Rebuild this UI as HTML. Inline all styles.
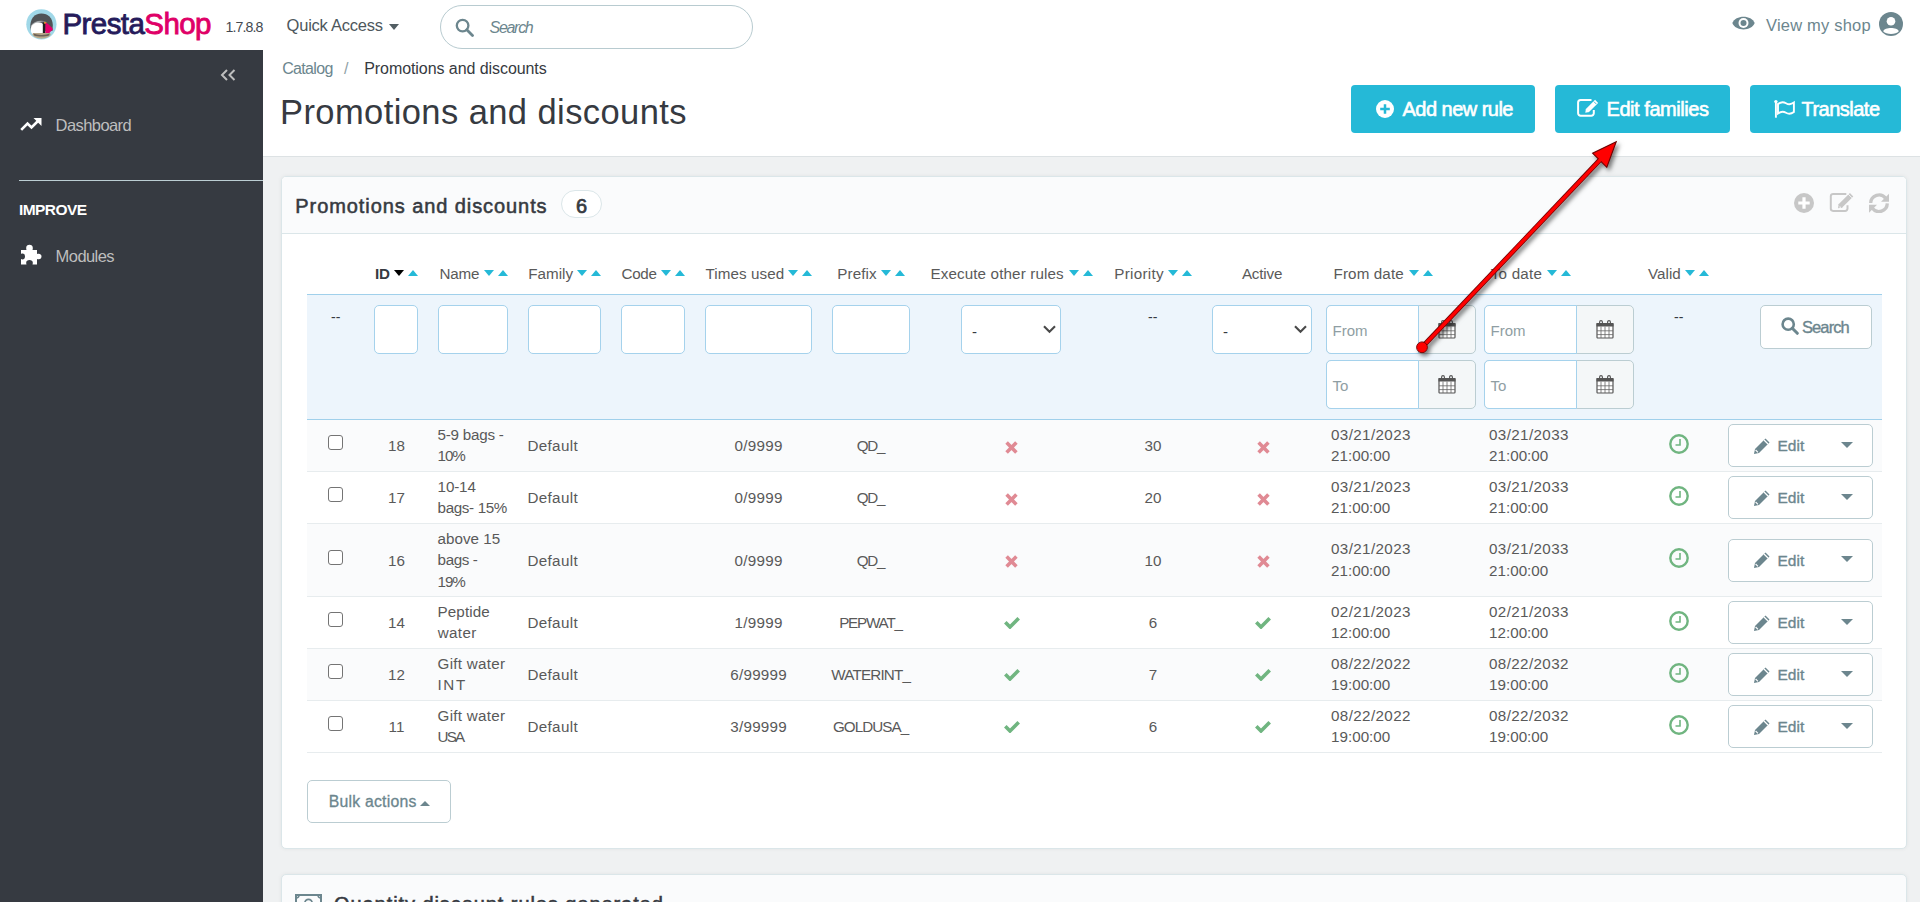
<!DOCTYPE html><html><head><meta charset='utf-8'><style>*{box-sizing:border-box;margin:0;padding:0}
html,body{width:1920px;height:902px;overflow:hidden;background:#eff1f2;font-family:"Liberation Sans",sans-serif;color:#363a41}
.a{position:absolute;white-space:nowrap}
</style></head><body>
<div class="a" style="left:0px;top:0px;width:1920px;height:50px;background:#fff"></div>
<div class="a" style="left:0px;top:50px;width:263px;height:852px;background:#363a41"></div>
<div class="a" style="left:263px;top:50px;width:1657px;height:107px;background:#fff;border-bottom:1px solid #dde2e4"></div>
<svg class="a" style="left:26px;top:9px" width="31" height="31" viewBox="0 0 31 31">
<circle cx="15.4" cy="15.3" r="15.1" fill="#a0d8e8"/>
<path d="M4.3 19 C3.8 9.5 8.5 4.6 15.4 4.6 C22 4.6 26.6 9 26.8 16 L26.5 22 L5 22Z" fill="#505457"/>
<path d="M4.8 16.8 C8 12 14 10.8 20.5 12.6 C14 12.5 9 14 5 18.5Z" fill="#a3a8ab"/>
<path d="M4.8 19.5 C5.5 15.5 9 13.6 13 13.6 C16.5 13.6 18.3 15.5 18.3 19 L18 25.5 C14.5 27.5 9 27.5 6.5 25.5 C5 23.5 4.6 21.5 4.8 19.5Z" fill="#fff"/>
<path d="M16.8 13.8 L19.6 13.5 L19.2 25 L16.8 25Z" fill="#1e1e1e"/>
<path d="M18.3 12.7 L20.6 13.3 L20 15.1 L18 14.5Z" fill="#f2a02c"/>
<path d="M19.5 13.4 C22.5 14.9 25.2 17.4 27 20.3 L21.8 25.6 L19.3 25Z" fill="#e4006c"/>
<path d="M6.3 25.5 C9 31 22 31 24.8 25.5 L24 24 L7 24Z" fill="#b8a88b"/>
<path d="M7.5 24.6 C11 26.5 20 26.5 23.6 24.6 L23 26.4 C19 27.8 12 27.8 8 26.4Z" fill="#6b6258"/>
</svg>
<div class="a" style="left:62.50px;top:9.22px;font-size:29.5px;line-height:29.5px;color:#251b5b;letter-spacing:-0.574px;-webkit-text-stroke:0.85px #251b5b;">Presta<span style="color:#df0067;-webkit-text-stroke:0.85px #df0067">Shop</span></div>
<div class="a" style="left:225.60px;top:19.83px;font-size:14.2px;line-height:14.2px;color:#45494f;letter-spacing:-0.921px;">1.7.8.8</div>
<div class="a" style="left:286.60px;top:17.48px;font-size:16.5px;line-height:16.5px;color:#4d575c;letter-spacing:-0.239px;">Quick Access</div>
<div class="a" style="left:389.3px;top:24px;width:0px;height:0px;border-left:5.25px solid transparent;border-right:5.25px solid transparent;border-top:6px solid #525e63"></div>
<div class="a" style="left:440px;top:5px;width:313px;height:44px;border:1px solid #b8cbd0;border-radius:22px"></div>
<svg class="a" style="left:455px;top:18px" width="20" height="19" viewBox="0 0 20 19"><circle cx="7.6" cy="7.6" r="5.8" fill="none" stroke="#6c868e" stroke-width="2.3"/><path d="M11.8 11.8 L17.5 17.5" stroke="#6c868e" stroke-width="2.8" stroke-linecap="round"/></svg>
<div class="a" style="left:489.50px;top:19.90px;font-size:16px;line-height:16px;color:#6c868e;font-style:italic;letter-spacing:-1.288px;">Search</div>
<svg class="a" style="left:1732px;top:14.5px" width="23" height="16" viewBox="0 0 23 16"><path d="M0.3 8 C3.5 -0.5 19.5 -0.5 22.7 8 C19.5 16.5 3.5 16.5 0.3 8Z" fill="#6c868e"/><circle cx="11.5" cy="8" r="5" fill="#fff"/><circle cx="11.5" cy="8" r="3" fill="#6c868e"/></svg>
<div class="a" style="left:1766.00px;top:16.57px;font-size:16.5px;line-height:16.5px;color:#6c868e;letter-spacing:0.199px;">View my shop</div>
<svg class="a" style="left:1879px;top:12px" width="24" height="24" viewBox="0 0 24 24"><circle cx="12" cy="12" r="12" fill="#6c868e"/><circle cx="12" cy="9.2" r="4.3" fill="#fff"/><path d="M4.2 19.2 C5.5 14.8 18.5 14.8 19.8 19.2 C17 22.8 7 22.8 4.2 19.2Z" fill="#fff"/></svg>
<svg class="a" style="left:220px;top:69px" width="17" height="12" viewBox="0 0 17 12"><path d="M7 1 L2 6 L7 11 M14.5 1 L9.5 6 L14.5 11" fill="none" stroke="#bebebe" stroke-width="2"/></svg>
<svg class="a" style="left:20px;top:117px" width="22" height="14" viewBox="0 0 22 14"><path d="M1.2 12.8 L7.5 6.5 L11.5 10.5 L18.5 3.5" fill="none" stroke="#fff" stroke-width="2.6"/><path d="M13.5 1 L21.5 1 L21.5 9 Z" fill="#fff"/></svg>
<div class="a" style="left:55.60px;top:116.78px;font-size:16.5px;line-height:16.5px;color:#bebebe;letter-spacing:-0.577px;">Dashboard</div>
<div class="a" style="left:19px;top:180px;width:244px;height:1px;background:#bbcdd2"></div>
<div class="a" style="left:19.00px;top:201.82px;font-size:15.5px;line-height:15.5px;color:#fff;font-weight:bold;letter-spacing:-0.581px;">IMPROVE</div>
<svg class="a" style="left:20px;top:244px" width="22" height="21" viewBox="0 0 22 21"><path d="M1 6 L6.5 6 C5.5 2.5 7 0.8 9.5 0.8 C12 0.8 13.5 2.5 12.5 6 L17 6 L17 10 C20 9 21.5 10.5 21.5 12.5 C21.5 14.5 20 16 17 15 L17 20.5 L12.5 20.5 C13.5 17.5 12 16 9.5 16 C7 16 5.5 17.5 6.5 20.5 L1 20.5 L1 15 C3 16 5 15 5 12.5 C5 10 3 9 1 10 Z" fill="#fff"/></svg>
<div class="a" style="left:55.60px;top:248.37px;font-size:16.5px;line-height:16.5px;color:#bebebe;letter-spacing:-0.562px;">Modules</div>
<div class="a" style="left:282.20px;top:60.60px;font-size:16px;line-height:16px;color:#6c868e;letter-spacing:-0.675px;">Catalog</div>
<div class="a" style="left:344.00px;top:60.60px;font-size:16px;line-height:16px;color:#8fa1a6;">/</div>
<div class="a" style="left:364.20px;top:60.60px;font-size:16px;line-height:16px;color:#363a41;letter-spacing:-0.067px;">Promotions and discounts</div>
<div class="a" style="left:280.00px;top:95.28px;font-size:34.5px;line-height:34.5px;color:#363a41;letter-spacing:0.415px;">Promotions and discounts</div>
<div class="a" style="left:1351px;top:85px;width:184px;height:48px;background:#25b9d7;border-radius:4px"></div>
<svg class="a" style="left:1375.7px;top:99.7px" width="18" height="18" viewBox="0 0 18 18"><circle cx="9" cy="9" r="9" fill="#fff"/><path d="M9 4.2 V13.8 M4.2 9 H13.8" stroke="#25b9d7" stroke-width="2.5"/></svg>
<div class="a" style="left:1402.50px;top:99.10px;font-size:20px;line-height:20px;color:#fff;letter-spacing:-0.522px;-webkit-text-stroke:0.6px #fff;">Add new rule</div>
<div class="a" style="left:1555px;top:85px;width:175px;height:48px;background:#25b9d7;border-radius:4px"></div>
<svg class="a" style="left:1577px;top:99px" width="23" height="18" viewBox="0 0 23 18"><path d="M14.5 1.1 H3.6 A2.5 2.5 0 0 0 1.1 3.6 V14.3 A2.5 2.5 0 0 0 3.6 16.8 H14.3 A2.5 2.5 0 0 0 16.8 14.3 V11" stroke="#fff" stroke-width="2" fill="none"/><path d="M10.2 11.8 L19.6 2.4" stroke="#fff" stroke-width="4.4"/><path d="M8.3 13.7 L8.9 9.8 L12.2 13.1 Z" fill="#fff"/><path d="M16.9 2.6 L19.4 5.1" stroke="#25b9d7" stroke-width="0.9"/></svg>
<div class="a" style="left:1606.50px;top:99.10px;font-size:20px;line-height:20px;color:#fff;letter-spacing:-0.443px;-webkit-text-stroke:0.6px #fff;">Edit families</div>
<div class="a" style="left:1750px;top:85px;width:151px;height:48px;background:#25b9d7;border-radius:4px"></div>
<svg class="a" style="left:1772px;top:99px" width="24" height="20" viewBox="0 0 24 20"><path d="M3.9 2.8 V18.7" stroke="#fff" stroke-width="1.9"/><circle cx="3.9" cy="2.6" r="1.7" fill="#fff"/><path d="M6 5 C9 2.6 12 3 14 4.2 C16 5.4 19 5.7 21.9 3.6 V13 C19 15.1 16 14.9 14 13.7 C12 12.5 9 12.1 6 14.4 Z" stroke="#fff" stroke-width="1.9" fill="none"/></svg>
<div class="a" style="left:1801.50px;top:99.10px;font-size:20px;line-height:20px;color:#fff;letter-spacing:-0.515px;-webkit-text-stroke:0.6px #fff;">Translate</div>
<div class="a" style="left:281px;top:176px;width:1626px;height:673px;background:#fff;border:1px solid #dbe6e9;border-radius:5px;box-shadow:0 0 4px 0 rgba(0,0,0,.06)"></div>
<div class="a" style="left:282px;top:177px;width:1624px;height:57px;background:#fafbfc;border-radius:4px 4px 0 0;border-bottom:1px solid #dbe6e9"></div>
<div class="a" style="left:295.30px;top:195.80px;font-size:20px;line-height:20px;color:#363a41;letter-spacing:0.921px;-webkit-text-stroke:0.55px #363a41;">Promotions and discounts</div>
<div class="a" style="left:561px;top:190px;width:41px;height:28px;border:1px solid #dbe6e9;border-radius:14px;background:#fff"></div>
<div class="a" style="left:581.50px;top:195.80px;font-size:20px;line-height:20px;color:#363a41;transform:translateX(-50%);-webkit-text-stroke:0.7px #363a41;">6</div>
<svg class="a" style="left:1793.9px;top:192.7px" width="20" height="20" viewBox="0 0 20 20"><circle cx="10" cy="10" r="10" fill="#c7c7c7"/><path d="M10 4.3 V15.7 M4.3 10 H15.7" stroke="#fff" stroke-width="3.2"/></svg>
<svg class="a" style="left:1829px;top:191.5px" width="26" height="21" viewBox="0 0 26 21"><path d="M17.3 1.9 H4.1 A2.3 2.3 0 0 0 1.8 4.2 V16.6 A2.3 2.3 0 0 0 4.1 18.9 H16.2 A2.3 2.3 0 0 0 18.5 16.6 V13.3" fill="none" stroke="#c7c7c7" stroke-width="2"/><path d="M11 14.2 L22.6 2.8" stroke="#c7c7c7" stroke-width="4.8"/><path d="M9 16.3 L9.7 11.7 L13.6 15.6 Z" fill="#c7c7c7"/><path d="M19.2 2.1 L22.9 5.8" stroke="#fafbfc" stroke-width="0.9"/><path d="M10.6 14.6 L11.6 15.6" stroke="#fafbfc" stroke-width="1.1"/></svg>
<svg class="a" style="left:1869px;top:192.5px" width="20" height="20" viewBox="0 0 20 20"><path d="M1.7 10 A8.3 8.3 0 0 1 16.6 5.2" fill="none" stroke="#c7c7c7" stroke-width="3.3"/><path d="M20 0.8 V8.8 H12 Z" fill="#c7c7c7"/><path d="M18.3 10.4 A8.3 8.3 0 0 1 3.4 15.2" fill="none" stroke="#c7c7c7" stroke-width="3.3"/><path d="M0 19.8 V11.8 H8 Z" fill="#c7c7c7"/></svg>
<div class="a" style="left:375.00px;top:265.98px;font-size:15.2px;line-height:15.2px;color:#363a41;font-weight:bold;letter-spacing:-0.200px;">ID</div>
<div class="a" style="left:394px;top:270px;width:0px;height:0px;border-left:5.25px solid transparent;border-right:5.25px solid transparent;border-top:6px solid #000"></div>
<div class="a" style="left:408px;top:270.2px;width:0px;height:0px;border-left:5.25px solid transparent;border-right:5.25px solid transparent;border-bottom:6px solid #25b9d7"></div>
<div class="a" style="left:439.50px;top:265.98px;font-size:15.2px;line-height:15.2px;color:#5a5a5a;letter-spacing:-0.185px;">Name</div>
<div class="a" style="left:484.1px;top:270px;width:0px;height:0px;border-left:5.25px solid transparent;border-right:5.25px solid transparent;border-top:6px solid #25b9d7"></div>
<div class="a" style="left:498.1px;top:270.2px;width:0px;height:0px;border-left:5.25px solid transparent;border-right:5.25px solid transparent;border-bottom:6px solid #25b9d7"></div>
<div class="a" style="left:528.30px;top:265.98px;font-size:15.2px;line-height:15.2px;color:#5a5a5a;letter-spacing:0.010px;">Family</div>
<div class="a" style="left:577.3px;top:270px;width:0px;height:0px;border-left:5.25px solid transparent;border-right:5.25px solid transparent;border-top:6px solid #25b9d7"></div>
<div class="a" style="left:591.3px;top:270.2px;width:0px;height:0px;border-left:5.25px solid transparent;border-right:5.25px solid transparent;border-bottom:6px solid #25b9d7"></div>
<div class="a" style="left:621.50px;top:265.98px;font-size:15.2px;line-height:15.2px;color:#5a5a5a;letter-spacing:-0.314px;">Code</div>
<div class="a" style="left:661px;top:270px;width:0px;height:0px;border-left:5.25px solid transparent;border-right:5.25px solid transparent;border-top:6px solid #25b9d7"></div>
<div class="a" style="left:675px;top:270.2px;width:0px;height:0px;border-left:5.25px solid transparent;border-right:5.25px solid transparent;border-bottom:6px solid #25b9d7"></div>
<div class="a" style="left:705.40px;top:265.98px;font-size:15.2px;line-height:15.2px;color:#5a5a5a;letter-spacing:0.090px;">Times used</div>
<div class="a" style="left:788.3px;top:270px;width:0px;height:0px;border-left:5.25px solid transparent;border-right:5.25px solid transparent;border-top:6px solid #25b9d7"></div>
<div class="a" style="left:802.3px;top:270.2px;width:0px;height:0px;border-left:5.25px solid transparent;border-right:5.25px solid transparent;border-bottom:6px solid #25b9d7"></div>
<div class="a" style="left:837.30px;top:265.98px;font-size:15.2px;line-height:15.2px;color:#5a5a5a;letter-spacing:0.110px;">Prefix</div>
<div class="a" style="left:881px;top:270px;width:0px;height:0px;border-left:5.25px solid transparent;border-right:5.25px solid transparent;border-top:6px solid #25b9d7"></div>
<div class="a" style="left:895px;top:270.2px;width:0px;height:0px;border-left:5.25px solid transparent;border-right:5.25px solid transparent;border-bottom:6px solid #25b9d7"></div>
<div class="a" style="left:930.40px;top:265.98px;font-size:15.2px;line-height:15.2px;color:#5a5a5a;letter-spacing:0.133px;">Execute other rules</div>
<div class="a" style="left:1068.5px;top:270px;width:0px;height:0px;border-left:5.25px solid transparent;border-right:5.25px solid transparent;border-top:6px solid #25b9d7"></div>
<div class="a" style="left:1082.5px;top:270.2px;width:0px;height:0px;border-left:5.25px solid transparent;border-right:5.25px solid transparent;border-bottom:6px solid #25b9d7"></div>
<div class="a" style="left:1114.20px;top:265.98px;font-size:15.2px;line-height:15.2px;color:#5a5a5a;letter-spacing:0.323px;">Priority</div>
<div class="a" style="left:1168px;top:270px;width:0px;height:0px;border-left:5.25px solid transparent;border-right:5.25px solid transparent;border-top:6px solid #25b9d7"></div>
<div class="a" style="left:1182px;top:270.2px;width:0px;height:0px;border-left:5.25px solid transparent;border-right:5.25px solid transparent;border-bottom:6px solid #25b9d7"></div>
<div class="a" style="left:1241.90px;top:265.98px;font-size:15.2px;line-height:15.2px;color:#5a5a5a;letter-spacing:-0.158px;">Active</div>
<div class="a" style="left:1333.50px;top:265.98px;font-size:15.2px;line-height:15.2px;color:#5a5a5a;letter-spacing:0.123px;">From date</div>
<div class="a" style="left:1408.5px;top:270px;width:0px;height:0px;border-left:5.25px solid transparent;border-right:5.25px solid transparent;border-top:6px solid #25b9d7"></div>
<div class="a" style="left:1422.5px;top:270.2px;width:0px;height:0px;border-left:5.25px solid transparent;border-right:5.25px solid transparent;border-bottom:6px solid #25b9d7"></div>
<div class="a" style="left:1490.80px;top:265.98px;font-size:15.2px;line-height:15.2px;color:#5a5a5a;letter-spacing:0.207px;">To date</div>
<div class="a" style="left:1546.5px;top:270px;width:0px;height:0px;border-left:5.25px solid transparent;border-right:5.25px solid transparent;border-top:6px solid #25b9d7"></div>
<div class="a" style="left:1560.5px;top:270.2px;width:0px;height:0px;border-left:5.25px solid transparent;border-right:5.25px solid transparent;border-bottom:6px solid #25b9d7"></div>
<div class="a" style="left:1648.00px;top:265.98px;font-size:15.2px;line-height:15.2px;color:#5a5a5a;letter-spacing:0.034px;">Valid</div>
<div class="a" style="left:1685.2px;top:270px;width:0px;height:0px;border-left:5.25px solid transparent;border-right:5.25px solid transparent;border-top:6px solid #25b9d7"></div>
<div class="a" style="left:1699.2px;top:270.2px;width:0px;height:0px;border-left:5.25px solid transparent;border-right:5.25px solid transparent;border-bottom:6px solid #25b9d7"></div>
<div class="a" style="left:307px;top:294px;width:1575px;height:126px;background:#edf5fc;border-top:1px solid #a0d0eb;border-bottom:1px solid #a0d0eb"></div>
<div class="a" style="left:331.00px;top:309.50px;font-size:14px;line-height:14px;color:#363a41;">--</div>
<div class="a" style="left:1148.00px;top:309.50px;font-size:14px;line-height:14px;color:#363a41;">--</div>
<div class="a" style="left:1674.00px;top:309.50px;font-size:14px;line-height:14px;color:#363a41;">--</div>
<div class="a" style="left:374px;top:305px;width:44px;height:49px;background:#fff;border:1px solid #a5d2ec;border-radius:5px"></div>
<div class="a" style="left:438px;top:305px;width:70px;height:49px;background:#fff;border:1px solid #a5d2ec;border-radius:5px"></div>
<div class="a" style="left:528px;top:305px;width:73px;height:49px;background:#fff;border:1px solid #a5d2ec;border-radius:5px"></div>
<div class="a" style="left:621px;top:305px;width:64px;height:49px;background:#fff;border:1px solid #a5d2ec;border-radius:5px"></div>
<div class="a" style="left:705px;top:305px;width:107px;height:49px;background:#fff;border:1px solid #a5d2ec;border-radius:5px"></div>
<div class="a" style="left:832px;top:305px;width:78px;height:49px;background:#fff;border:1px solid #a5d2ec;border-radius:5px"></div>
<div class="a" style="left:961px;top:305px;width:100px;height:49px;background:#fff;border:1px solid #a5d2ec;border-radius:5px"></div>
<div class="a" style="left:972.00px;top:324.15px;font-size:15px;line-height:15px;color:#363a41;">-</div>
<svg class="a" style="left:1043px;top:325px" width="13" height="9" viewBox="0 0 13 9"><path d="M1 1.2 L6.5 6.8 L12 1.2" fill="none" stroke="#4a4a4a" stroke-width="2.1"/></svg>
<div class="a" style="left:1212px;top:305px;width:100px;height:49px;background:#fff;border:1px solid #a5d2ec;border-radius:5px"></div>
<div class="a" style="left:1223.00px;top:324.15px;font-size:15px;line-height:15px;color:#363a41;">-</div>
<svg class="a" style="left:1294px;top:325px" width="13" height="9" viewBox="0 0 13 9"><path d="M1 1.2 L6.5 6.8 L12 1.2" fill="none" stroke="#4a4a4a" stroke-width="2.1"/></svg>
<div class="a" style="left:1326px;top:305px;width:150px;height:49px;background:#f4f7f8;border:1px solid #bbcdd2;border-radius:5px"></div>
<div class="a" style="left:1326px;top:305px;width:92.5px;height:49px;background:#fff;border:1px solid #a5d2ec;border-radius:5px 0 0 5px"></div>
<div class="a" style="left:1332.50px;top:322.55px;font-size:15px;line-height:15px;color:#8f9ea3;">From</div>
<svg class="a" style="left:1438px;top:319.5px" width="18" height="19" viewBox="0 0 18 19"><rect x="1" y="3.5" width="16" height="14.5" rx="0.8" fill="#fff" stroke="#555" stroke-width="1.2"/><rect x="0.5" y="3" width="17" height="3.6" rx="0.6" fill="#555"/><rect x="3.6" y="0.6" width="2.8" height="4.6" rx="1.4" fill="none" stroke="#555" stroke-width="1.1"/><rect x="11.6" y="0.6" width="2.8" height="4.6" rx="1.4" fill="none" stroke="#555" stroke-width="1.1"/><path d="M1 10.8 H17 M1 14.6 H17 M5 6.6 V18 M9 6.6 V18 M13 6.6 V18" stroke="#666" stroke-width="0.8"/></svg>
<div class="a" style="left:1326px;top:360px;width:150px;height:49px;background:#f4f7f8;border:1px solid #bbcdd2;border-radius:5px"></div>
<div class="a" style="left:1326px;top:360px;width:92.5px;height:49px;background:#fff;border:1px solid #a5d2ec;border-radius:5px 0 0 5px"></div>
<div class="a" style="left:1332.50px;top:377.55px;font-size:15px;line-height:15px;color:#8f9ea3;">To</div>
<svg class="a" style="left:1438px;top:374.5px" width="18" height="19" viewBox="0 0 18 19"><rect x="1" y="3.5" width="16" height="14.5" rx="0.8" fill="#fff" stroke="#555" stroke-width="1.2"/><rect x="0.5" y="3" width="17" height="3.6" rx="0.6" fill="#555"/><rect x="3.6" y="0.6" width="2.8" height="4.6" rx="1.4" fill="none" stroke="#555" stroke-width="1.1"/><rect x="11.6" y="0.6" width="2.8" height="4.6" rx="1.4" fill="none" stroke="#555" stroke-width="1.1"/><path d="M1 10.8 H17 M1 14.6 H17 M5 6.6 V18 M9 6.6 V18 M13 6.6 V18" stroke="#666" stroke-width="0.8"/></svg>
<div class="a" style="left:1484px;top:305px;width:150px;height:49px;background:#f4f7f8;border:1px solid #bbcdd2;border-radius:5px"></div>
<div class="a" style="left:1484px;top:305px;width:92.5px;height:49px;background:#fff;border:1px solid #a5d2ec;border-radius:5px 0 0 5px"></div>
<div class="a" style="left:1490.50px;top:322.55px;font-size:15px;line-height:15px;color:#8f9ea3;">From</div>
<svg class="a" style="left:1596px;top:319.5px" width="18" height="19" viewBox="0 0 18 19"><rect x="1" y="3.5" width="16" height="14.5" rx="0.8" fill="#fff" stroke="#555" stroke-width="1.2"/><rect x="0.5" y="3" width="17" height="3.6" rx="0.6" fill="#555"/><rect x="3.6" y="0.6" width="2.8" height="4.6" rx="1.4" fill="none" stroke="#555" stroke-width="1.1"/><rect x="11.6" y="0.6" width="2.8" height="4.6" rx="1.4" fill="none" stroke="#555" stroke-width="1.1"/><path d="M1 10.8 H17 M1 14.6 H17 M5 6.6 V18 M9 6.6 V18 M13 6.6 V18" stroke="#666" stroke-width="0.8"/></svg>
<div class="a" style="left:1484px;top:360px;width:150px;height:49px;background:#f4f7f8;border:1px solid #bbcdd2;border-radius:5px"></div>
<div class="a" style="left:1484px;top:360px;width:92.5px;height:49px;background:#fff;border:1px solid #a5d2ec;border-radius:5px 0 0 5px"></div>
<div class="a" style="left:1490.50px;top:377.55px;font-size:15px;line-height:15px;color:#8f9ea3;">To</div>
<svg class="a" style="left:1596px;top:374.5px" width="18" height="19" viewBox="0 0 18 19"><rect x="1" y="3.5" width="16" height="14.5" rx="0.8" fill="#fff" stroke="#555" stroke-width="1.2"/><rect x="0.5" y="3" width="17" height="3.6" rx="0.6" fill="#555"/><rect x="3.6" y="0.6" width="2.8" height="4.6" rx="1.4" fill="none" stroke="#555" stroke-width="1.1"/><rect x="11.6" y="0.6" width="2.8" height="4.6" rx="1.4" fill="none" stroke="#555" stroke-width="1.1"/><path d="M1 10.8 H17 M1 14.6 H17 M5 6.6 V18 M9 6.6 V18 M13 6.6 V18" stroke="#666" stroke-width="0.8"/></svg>
<div class="a" style="left:1760px;top:305px;width:112px;height:44px;background:#fff;border:1px solid #bbcdd2;border-radius:5px"></div>
<svg class="a" style="left:1781px;top:317px" width="18" height="18" viewBox="0 0 18 18"><circle cx="7.2" cy="7.2" r="5.6" fill="none" stroke="#6c868e" stroke-width="2.6"/><path d="M11.3 11.3 L16.3 16.3" stroke="#6c868e" stroke-width="3" stroke-linecap="round"/></svg>
<div class="a" style="left:1801.90px;top:318.77px;font-size:16.5px;line-height:16.5px;color:#6c868e;letter-spacing:-0.874px;-webkit-text-stroke:0.35px #6c868e;">Search</div>
<div class="a" style="left:307px;top:420px;width:1575px;height:51px;background:#fafbfc"></div>
<div class="a" style="left:307px;top:471px;width:1575px;height:1px;background:#e7ecee"></div>
<div class="a" style="left:328px;top:435px;width:15px;height:15px;background:#fff;border:1.5px solid #747474;border-radius:3px"></div>
<div class="a" style="left:396.50px;top:438.48px;font-size:15.2px;line-height:15.2px;color:#595959;transform:translateX(-50%);">18</div>
<div class="a" style="left:437.60px;top:426.88px;font-size:15.2px;line-height:15.2px;color:#595959;letter-spacing:-0.237px;">5-9 bags -</div>
<div class="a" style="left:437.60px;top:448.48px;font-size:15.2px;line-height:15.2px;color:#595959;letter-spacing:-1.058px;">10%</div>
<div class="a" style="left:527.40px;top:438.48px;font-size:15.2px;line-height:15.2px;color:#595959;letter-spacing:0.358px;">Default</div>
<div class="a" style="left:734.50px;top:438.48px;font-size:15.2px;line-height:15.2px;color:#595959;letter-spacing:0.301px;">0/9999</div>
<div class="a" style="left:856.75px;top:438.48px;font-size:15.2px;line-height:15.2px;color:#595959;letter-spacing:-1.267px;">QD_</div>
<div class="a" style="left:1153.00px;top:438.48px;font-size:15.2px;line-height:15.2px;color:#595959;transform:translateX(-50%);">30</div>
<svg class="a" style="left:1005.0px;top:440.6px" width="13" height="13" viewBox="0 0 13 13"><path d="M1.6 1.6 L11.4 11.4 M11.4 1.6 L1.6 11.4" stroke="#e08a94" stroke-width="3.6"/></svg>
<svg class="a" style="left:1256.5px;top:440.6px" width="13" height="13" viewBox="0 0 13 13"><path d="M1.6 1.6 L11.4 11.4 M11.4 1.6 L1.6 11.4" stroke="#e08a94" stroke-width="3.6"/></svg>
<div class="a" style="left:1331.00px;top:426.88px;font-size:15.2px;line-height:15.2px;color:#595959;letter-spacing:0.380px;">03/21/2023</div>
<div class="a" style="left:1331.00px;top:448.48px;font-size:15.2px;line-height:15.2px;color:#595959;letter-spacing:0.018px;">21:00:00</div>
<div class="a" style="left:1489.00px;top:426.88px;font-size:15.2px;line-height:15.2px;color:#595959;letter-spacing:0.380px;">03/21/2033</div>
<div class="a" style="left:1489.00px;top:448.48px;font-size:15.2px;line-height:15.2px;color:#595959;letter-spacing:0.018px;">21:00:00</div>
<svg class="a" style="left:1669px;top:433.8px" width="20" height="20" viewBox="0 0 20 20"><circle cx="10" cy="10" r="8.7" fill="none" stroke="#70b580" stroke-width="2.4"/><path d="M11 5 V11 H6.5" fill="none" stroke="#70b580" stroke-width="1.6"/></svg>
<div class="a" style="left:1728px;top:424px;width:145px;height:43px;background:#fff;border:1px solid #bbcdd2;border-radius:5px"></div>
<svg class="a" style="left:1752.5px;top:436.5px" width="18" height="18" viewBox="0 0 18 18"><path d="M12.5 1.5 L16.5 5.5 L6 16 L1 17 L2 12 Z" fill="#6c868e"/><path d="M11 3 L15 7" stroke="#fff" stroke-width="1.2"/><path d="M2.6 13 L5 15.4" stroke="#fff" stroke-width="1.1"/></svg>
<div class="a" style="left:1777.50px;top:438.42px;font-size:15.5px;line-height:15.5px;color:#6c868e;letter-spacing:-0.002px;-webkit-text-stroke:0.35px #6c868e;">Edit</div>
<div class="a" style="left:1841px;top:442px;width:0px;height:0px;border-left:6px solid transparent;border-right:6px solid transparent;border-top:6.5px solid #6c868e"></div>
<div class="a" style="left:307px;top:472px;width:1575px;height:51px;background:#fff"></div>
<div class="a" style="left:307px;top:523px;width:1575px;height:1px;background:#e7ecee"></div>
<div class="a" style="left:328px;top:487px;width:15px;height:15px;background:#fff;border:1.5px solid #747474;border-radius:3px"></div>
<div class="a" style="left:396.50px;top:490.48px;font-size:15.2px;line-height:15.2px;color:#595959;transform:translateX(-50%);">17</div>
<div class="a" style="left:437.60px;top:478.88px;font-size:15.2px;line-height:15.2px;color:#595959;letter-spacing:-0.145px;">10-14</div>
<div class="a" style="left:437.60px;top:500.48px;font-size:15.2px;line-height:15.2px;color:#595959;letter-spacing:-0.359px;">bags- 15%</div>
<div class="a" style="left:527.40px;top:490.48px;font-size:15.2px;line-height:15.2px;color:#595959;letter-spacing:0.358px;">Default</div>
<div class="a" style="left:734.50px;top:490.48px;font-size:15.2px;line-height:15.2px;color:#595959;letter-spacing:0.301px;">0/9999</div>
<div class="a" style="left:856.75px;top:490.48px;font-size:15.2px;line-height:15.2px;color:#595959;letter-spacing:-1.267px;">QD_</div>
<div class="a" style="left:1153.00px;top:490.48px;font-size:15.2px;line-height:15.2px;color:#595959;transform:translateX(-50%);">20</div>
<svg class="a" style="left:1005.0px;top:492.6px" width="13" height="13" viewBox="0 0 13 13"><path d="M1.6 1.6 L11.4 11.4 M11.4 1.6 L1.6 11.4" stroke="#e08a94" stroke-width="3.6"/></svg>
<svg class="a" style="left:1256.5px;top:492.6px" width="13" height="13" viewBox="0 0 13 13"><path d="M1.6 1.6 L11.4 11.4 M11.4 1.6 L1.6 11.4" stroke="#e08a94" stroke-width="3.6"/></svg>
<div class="a" style="left:1331.00px;top:478.88px;font-size:15.2px;line-height:15.2px;color:#595959;letter-spacing:0.380px;">03/21/2023</div>
<div class="a" style="left:1331.00px;top:500.48px;font-size:15.2px;line-height:15.2px;color:#595959;letter-spacing:0.018px;">21:00:00</div>
<div class="a" style="left:1489.00px;top:478.88px;font-size:15.2px;line-height:15.2px;color:#595959;letter-spacing:0.380px;">03/21/2033</div>
<div class="a" style="left:1489.00px;top:500.48px;font-size:15.2px;line-height:15.2px;color:#595959;letter-spacing:0.018px;">21:00:00</div>
<svg class="a" style="left:1669px;top:485.8px" width="20" height="20" viewBox="0 0 20 20"><circle cx="10" cy="10" r="8.7" fill="none" stroke="#70b580" stroke-width="2.4"/><path d="M11 5 V11 H6.5" fill="none" stroke="#70b580" stroke-width="1.6"/></svg>
<div class="a" style="left:1728px;top:476px;width:145px;height:43px;background:#fff;border:1px solid #bbcdd2;border-radius:5px"></div>
<svg class="a" style="left:1752.5px;top:488.5px" width="18" height="18" viewBox="0 0 18 18"><path d="M12.5 1.5 L16.5 5.5 L6 16 L1 17 L2 12 Z" fill="#6c868e"/><path d="M11 3 L15 7" stroke="#fff" stroke-width="1.2"/><path d="M2.6 13 L5 15.4" stroke="#fff" stroke-width="1.1"/></svg>
<div class="a" style="left:1777.50px;top:490.42px;font-size:15.5px;line-height:15.5px;color:#6c868e;letter-spacing:-0.002px;-webkit-text-stroke:0.35px #6c868e;">Edit</div>
<div class="a" style="left:1841px;top:494px;width:0px;height:0px;border-left:6px solid transparent;border-right:6px solid transparent;border-top:6.5px solid #6c868e"></div>
<div class="a" style="left:307px;top:524px;width:1575px;height:72px;background:#fafbfc"></div>
<div class="a" style="left:307px;top:596px;width:1575px;height:1px;background:#e7ecee"></div>
<div class="a" style="left:328px;top:550px;width:15px;height:15px;background:#fff;border:1.5px solid #747474;border-radius:3px"></div>
<div class="a" style="left:396.50px;top:552.98px;font-size:15.2px;line-height:15.2px;color:#595959;transform:translateX(-50%);">16</div>
<div class="a" style="left:437.60px;top:530.58px;font-size:15.2px;line-height:15.2px;color:#595959;letter-spacing:0.022px;">above 15</div>
<div class="a" style="left:437.60px;top:552.18px;font-size:15.2px;line-height:15.2px;color:#595959;letter-spacing:-0.388px;">bags -</div>
<div class="a" style="left:437.60px;top:573.78px;font-size:15.2px;line-height:15.2px;color:#595959;letter-spacing:-1.058px;">19%</div>
<div class="a" style="left:527.40px;top:552.98px;font-size:15.2px;line-height:15.2px;color:#595959;letter-spacing:0.358px;">Default</div>
<div class="a" style="left:734.50px;top:552.98px;font-size:15.2px;line-height:15.2px;color:#595959;letter-spacing:0.301px;">0/9999</div>
<div class="a" style="left:856.75px;top:552.98px;font-size:15.2px;line-height:15.2px;color:#595959;letter-spacing:-1.267px;">QD_</div>
<div class="a" style="left:1153.00px;top:552.98px;font-size:15.2px;line-height:15.2px;color:#595959;transform:translateX(-50%);">10</div>
<svg class="a" style="left:1005.0px;top:555.1px" width="13" height="13" viewBox="0 0 13 13"><path d="M1.6 1.6 L11.4 11.4 M11.4 1.6 L1.6 11.4" stroke="#e08a94" stroke-width="3.6"/></svg>
<svg class="a" style="left:1256.5px;top:555.1px" width="13" height="13" viewBox="0 0 13 13"><path d="M1.6 1.6 L11.4 11.4 M11.4 1.6 L1.6 11.4" stroke="#e08a94" stroke-width="3.6"/></svg>
<div class="a" style="left:1331.00px;top:541.38px;font-size:15.2px;line-height:15.2px;color:#595959;letter-spacing:0.380px;">03/21/2023</div>
<div class="a" style="left:1331.00px;top:562.98px;font-size:15.2px;line-height:15.2px;color:#595959;letter-spacing:0.018px;">21:00:00</div>
<div class="a" style="left:1489.00px;top:541.38px;font-size:15.2px;line-height:15.2px;color:#595959;letter-spacing:0.380px;">03/21/2033</div>
<div class="a" style="left:1489.00px;top:562.98px;font-size:15.2px;line-height:15.2px;color:#595959;letter-spacing:0.018px;">21:00:00</div>
<svg class="a" style="left:1669px;top:548.3px" width="20" height="20" viewBox="0 0 20 20"><circle cx="10" cy="10" r="8.7" fill="none" stroke="#70b580" stroke-width="2.4"/><path d="M11 5 V11 H6.5" fill="none" stroke="#70b580" stroke-width="1.6"/></svg>
<div class="a" style="left:1728px;top:539px;width:145px;height:43px;background:#fff;border:1px solid #bbcdd2;border-radius:5px"></div>
<svg class="a" style="left:1752.5px;top:551.0px" width="18" height="18" viewBox="0 0 18 18"><path d="M12.5 1.5 L16.5 5.5 L6 16 L1 17 L2 12 Z" fill="#6c868e"/><path d="M11 3 L15 7" stroke="#fff" stroke-width="1.2"/><path d="M2.6 13 L5 15.4" stroke="#fff" stroke-width="1.1"/></svg>
<div class="a" style="left:1777.50px;top:552.93px;font-size:15.5px;line-height:15.5px;color:#6c868e;letter-spacing:-0.002px;-webkit-text-stroke:0.35px #6c868e;">Edit</div>
<div class="a" style="left:1841px;top:556px;width:0px;height:0px;border-left:6px solid transparent;border-right:6px solid transparent;border-top:6.5px solid #6c868e"></div>
<div class="a" style="left:307px;top:597px;width:1575px;height:51px;background:#fff"></div>
<div class="a" style="left:307px;top:648px;width:1575px;height:1px;background:#e7ecee"></div>
<div class="a" style="left:328px;top:612px;width:15px;height:15px;background:#fff;border:1.5px solid #747474;border-radius:3px"></div>
<div class="a" style="left:396.50px;top:615.48px;font-size:15.2px;line-height:15.2px;color:#595959;transform:translateX(-50%);">14</div>
<div class="a" style="left:437.60px;top:603.88px;font-size:15.2px;line-height:15.2px;color:#595959;letter-spacing:0.090px;">Peptide</div>
<div class="a" style="left:437.63px;top:625.48px;font-size:15.2px;line-height:15.2px;color:#595959;letter-spacing:0.376px;">water</div>
<div class="a" style="left:527.40px;top:615.48px;font-size:15.2px;line-height:15.2px;color:#595959;letter-spacing:0.358px;">Default</div>
<div class="a" style="left:734.50px;top:615.48px;font-size:15.2px;line-height:15.2px;color:#595959;letter-spacing:0.301px;">1/9999</div>
<div class="a" style="left:839.15px;top:615.48px;font-size:15.2px;line-height:15.2px;color:#595959;letter-spacing:-1.170px;">PEPWAT_</div>
<div class="a" style="left:1153.00px;top:615.48px;font-size:15.2px;line-height:15.2px;color:#595959;transform:translateX(-50%);">6</div>
<svg class="a" style="left:1003.5px;top:616.7px" width="16" height="12" viewBox="0 0 16 12"><path d="M1.3 5.3 L6 10 L14.7 1.3" fill="none" stroke="#70b580" stroke-width="3.6"/></svg>
<svg class="a" style="left:1255.0px;top:616.7px" width="16" height="12" viewBox="0 0 16 12"><path d="M1.3 5.3 L6 10 L14.7 1.3" fill="none" stroke="#70b580" stroke-width="3.6"/></svg>
<div class="a" style="left:1331.00px;top:603.88px;font-size:15.2px;line-height:15.2px;color:#595959;letter-spacing:0.380px;">02/21/2023</div>
<div class="a" style="left:1331.00px;top:625.48px;font-size:15.2px;line-height:15.2px;color:#595959;letter-spacing:0.018px;">12:00:00</div>
<div class="a" style="left:1489.00px;top:603.88px;font-size:15.2px;line-height:15.2px;color:#595959;letter-spacing:0.380px;">02/21/2033</div>
<div class="a" style="left:1489.00px;top:625.48px;font-size:15.2px;line-height:15.2px;color:#595959;letter-spacing:0.018px;">12:00:00</div>
<svg class="a" style="left:1669px;top:610.8px" width="20" height="20" viewBox="0 0 20 20"><circle cx="10" cy="10" r="8.7" fill="none" stroke="#70b580" stroke-width="2.4"/><path d="M11 5 V11 H6.5" fill="none" stroke="#70b580" stroke-width="1.6"/></svg>
<div class="a" style="left:1728px;top:601px;width:145px;height:43px;background:#fff;border:1px solid #bbcdd2;border-radius:5px"></div>
<svg class="a" style="left:1752.5px;top:613.5px" width="18" height="18" viewBox="0 0 18 18"><path d="M12.5 1.5 L16.5 5.5 L6 16 L1 17 L2 12 Z" fill="#6c868e"/><path d="M11 3 L15 7" stroke="#fff" stroke-width="1.2"/><path d="M2.6 13 L5 15.4" stroke="#fff" stroke-width="1.1"/></svg>
<div class="a" style="left:1777.50px;top:615.43px;font-size:15.5px;line-height:15.5px;color:#6c868e;letter-spacing:-0.002px;-webkit-text-stroke:0.35px #6c868e;">Edit</div>
<div class="a" style="left:1841px;top:619px;width:0px;height:0px;border-left:6px solid transparent;border-right:6px solid transparent;border-top:6.5px solid #6c868e"></div>
<div class="a" style="left:307px;top:649px;width:1575px;height:51px;background:#fafbfc"></div>
<div class="a" style="left:307px;top:700px;width:1575px;height:1px;background:#e7ecee"></div>
<div class="a" style="left:328px;top:664px;width:15px;height:15px;background:#fff;border:1.5px solid #747474;border-radius:3px"></div>
<div class="a" style="left:396.50px;top:667.48px;font-size:15.2px;line-height:15.2px;color:#595959;transform:translateX(-50%);">12</div>
<div class="a" style="left:437.60px;top:655.88px;font-size:15.2px;line-height:15.2px;color:#595959;letter-spacing:0.262px;">Gift water</div>
<div class="a" style="left:437.60px;top:677.48px;font-size:15.2px;line-height:15.2px;color:#595959;letter-spacing:1.556px;">INT</div>
<div class="a" style="left:527.40px;top:667.48px;font-size:15.2px;line-height:15.2px;color:#595959;letter-spacing:0.358px;">Default</div>
<div class="a" style="left:730.20px;top:667.48px;font-size:15.2px;line-height:15.2px;color:#595959;letter-spacing:0.275px;">6/99999</div>
<div class="a" style="left:831.25px;top:667.48px;font-size:15.2px;line-height:15.2px;color:#595959;letter-spacing:-0.801px;">WATERINT_</div>
<div class="a" style="left:1153.00px;top:667.48px;font-size:15.2px;line-height:15.2px;color:#595959;transform:translateX(-50%);">7</div>
<svg class="a" style="left:1003.5px;top:668.7px" width="16" height="12" viewBox="0 0 16 12"><path d="M1.3 5.3 L6 10 L14.7 1.3" fill="none" stroke="#70b580" stroke-width="3.6"/></svg>
<svg class="a" style="left:1255.0px;top:668.7px" width="16" height="12" viewBox="0 0 16 12"><path d="M1.3 5.3 L6 10 L14.7 1.3" fill="none" stroke="#70b580" stroke-width="3.6"/></svg>
<div class="a" style="left:1331.00px;top:655.88px;font-size:15.2px;line-height:15.2px;color:#595959;letter-spacing:0.380px;">08/22/2022</div>
<div class="a" style="left:1331.00px;top:677.48px;font-size:15.2px;line-height:15.2px;color:#595959;letter-spacing:0.018px;">19:00:00</div>
<div class="a" style="left:1489.00px;top:655.88px;font-size:15.2px;line-height:15.2px;color:#595959;letter-spacing:0.380px;">08/22/2032</div>
<div class="a" style="left:1489.00px;top:677.48px;font-size:15.2px;line-height:15.2px;color:#595959;letter-spacing:0.018px;">19:00:00</div>
<svg class="a" style="left:1669px;top:662.8px" width="20" height="20" viewBox="0 0 20 20"><circle cx="10" cy="10" r="8.7" fill="none" stroke="#70b580" stroke-width="2.4"/><path d="M11 5 V11 H6.5" fill="none" stroke="#70b580" stroke-width="1.6"/></svg>
<div class="a" style="left:1728px;top:653px;width:145px;height:43px;background:#fff;border:1px solid #bbcdd2;border-radius:5px"></div>
<svg class="a" style="left:1752.5px;top:665.5px" width="18" height="18" viewBox="0 0 18 18"><path d="M12.5 1.5 L16.5 5.5 L6 16 L1 17 L2 12 Z" fill="#6c868e"/><path d="M11 3 L15 7" stroke="#fff" stroke-width="1.2"/><path d="M2.6 13 L5 15.4" stroke="#fff" stroke-width="1.1"/></svg>
<div class="a" style="left:1777.50px;top:667.43px;font-size:15.5px;line-height:15.5px;color:#6c868e;letter-spacing:-0.002px;-webkit-text-stroke:0.35px #6c868e;">Edit</div>
<div class="a" style="left:1841px;top:671px;width:0px;height:0px;border-left:6px solid transparent;border-right:6px solid transparent;border-top:6.5px solid #6c868e"></div>
<div class="a" style="left:307px;top:701px;width:1575px;height:51px;background:#fff"></div>
<div class="a" style="left:307px;top:752px;width:1575px;height:1px;background:#e7ecee"></div>
<div class="a" style="left:328px;top:716px;width:15px;height:15px;background:#fff;border:1.5px solid #747474;border-radius:3px"></div>
<div class="a" style="left:396.50px;top:719.48px;font-size:15.2px;line-height:15.2px;color:#595959;transform:translateX(-50%);">11</div>
<div class="a" style="left:437.60px;top:707.88px;font-size:15.2px;line-height:15.2px;color:#595959;letter-spacing:0.262px;">Gift water</div>
<div class="a" style="left:437.60px;top:729.48px;font-size:15.2px;line-height:15.2px;color:#595959;letter-spacing:-1.826px;">USA</div>
<div class="a" style="left:527.40px;top:719.48px;font-size:15.2px;line-height:15.2px;color:#595959;letter-spacing:0.358px;">Default</div>
<div class="a" style="left:730.20px;top:719.48px;font-size:15.2px;line-height:15.2px;color:#595959;letter-spacing:0.275px;">3/99999</div>
<div class="a" style="left:832.95px;top:719.48px;font-size:15.2px;line-height:15.2px;color:#595959;letter-spacing:-0.923px;">GOLDUSA_</div>
<div class="a" style="left:1153.00px;top:719.48px;font-size:15.2px;line-height:15.2px;color:#595959;transform:translateX(-50%);">6</div>
<svg class="a" style="left:1003.5px;top:720.7px" width="16" height="12" viewBox="0 0 16 12"><path d="M1.3 5.3 L6 10 L14.7 1.3" fill="none" stroke="#70b580" stroke-width="3.6"/></svg>
<svg class="a" style="left:1255.0px;top:720.7px" width="16" height="12" viewBox="0 0 16 12"><path d="M1.3 5.3 L6 10 L14.7 1.3" fill="none" stroke="#70b580" stroke-width="3.6"/></svg>
<div class="a" style="left:1331.00px;top:707.88px;font-size:15.2px;line-height:15.2px;color:#595959;letter-spacing:0.380px;">08/22/2022</div>
<div class="a" style="left:1331.00px;top:729.48px;font-size:15.2px;line-height:15.2px;color:#595959;letter-spacing:0.018px;">19:00:00</div>
<div class="a" style="left:1489.00px;top:707.88px;font-size:15.2px;line-height:15.2px;color:#595959;letter-spacing:0.380px;">08/22/2032</div>
<div class="a" style="left:1489.00px;top:729.48px;font-size:15.2px;line-height:15.2px;color:#595959;letter-spacing:0.018px;">19:00:00</div>
<svg class="a" style="left:1669px;top:714.8px" width="20" height="20" viewBox="0 0 20 20"><circle cx="10" cy="10" r="8.7" fill="none" stroke="#70b580" stroke-width="2.4"/><path d="M11 5 V11 H6.5" fill="none" stroke="#70b580" stroke-width="1.6"/></svg>
<div class="a" style="left:1728px;top:705px;width:145px;height:43px;background:#fff;border:1px solid #bbcdd2;border-radius:5px"></div>
<svg class="a" style="left:1752.5px;top:717.5px" width="18" height="18" viewBox="0 0 18 18"><path d="M12.5 1.5 L16.5 5.5 L6 16 L1 17 L2 12 Z" fill="#6c868e"/><path d="M11 3 L15 7" stroke="#fff" stroke-width="1.2"/><path d="M2.6 13 L5 15.4" stroke="#fff" stroke-width="1.1"/></svg>
<div class="a" style="left:1777.50px;top:719.43px;font-size:15.5px;line-height:15.5px;color:#6c868e;letter-spacing:-0.002px;-webkit-text-stroke:0.35px #6c868e;">Edit</div>
<div class="a" style="left:1841px;top:723px;width:0px;height:0px;border-left:6px solid transparent;border-right:6px solid transparent;border-top:6.5px solid #6c868e"></div>
<div class="a" style="left:307px;top:780px;width:144px;height:43px;background:#fff;border:1px solid #bbcdd2;border-radius:5px"></div>
<div class="a" style="left:328.80px;top:793.97px;font-size:15.8px;line-height:15.8px;color:#6c868e;letter-spacing:0.210px;-webkit-text-stroke:0.3px #6c868e;">Bulk actions</div>
<div class="a" style="left:420px;top:800.5px;width:0px;height:0px;border-left:5px solid transparent;border-right:5px solid transparent;border-bottom:5px solid #6c868e"></div>
<div class="a" style="left:281px;top:874px;width:1626px;height:60px;background:#fafbfc;border:1px solid #dbe6e9;border-radius:5px;box-shadow:0 0 4px 0 rgba(0,0,0,.06)"></div>
<svg class="a" style="left:295px;top:894px" width="27" height="12" viewBox="0 0 27 12"><rect x="1" y="1" width="25" height="16" fill="none" stroke="#6c868e" stroke-width="2"/><path d="M1 4 Q4 4 4 1 M26 4 Q23 4 23 1" fill="none" stroke="#6c868e" stroke-width="1.5"/><circle cx="13.5" cy="9" r="3.6" fill="none" stroke="#6c868e" stroke-width="1.8"/></svg>
<div class="a" style="left:334.00px;top:893.90px;font-size:20px;line-height:20px;color:#363a41;letter-spacing:0.929px;-webkit-text-stroke:0.55px #363a41;">Quantity discount rules generated</div>
<svg class="a" style="left:0;top:0" width="1920" height="902" viewBox="0 0 1920 902"><defs><filter id="sh" x="-20%" y="-20%" width="140%" height="140%"><feDropShadow dx="2.5" dy="3" stdDeviation="2.2" flood-color="#000" flood-opacity="0.5"/></filter></defs><g filter="url(#sh)"><line x1="1422" y1="347.3" x2="1601" y2="158.8" stroke="#6e0000" stroke-width="4.9"/><path d="M1616.2 141.8 L1592.6 153.2 L1606.8 167.3 Z" fill="#f00" stroke="#6e0000" stroke-width="1.1" stroke-linejoin="miter"/><line x1="1422" y1="347.3" x2="1602" y2="157.8" stroke="#f00" stroke-width="3.4"/><circle cx="1422" cy="347.3" r="5.4" fill="#f00" stroke="#6e0000" stroke-width="0.9"/></g></svg>
</body></html>
